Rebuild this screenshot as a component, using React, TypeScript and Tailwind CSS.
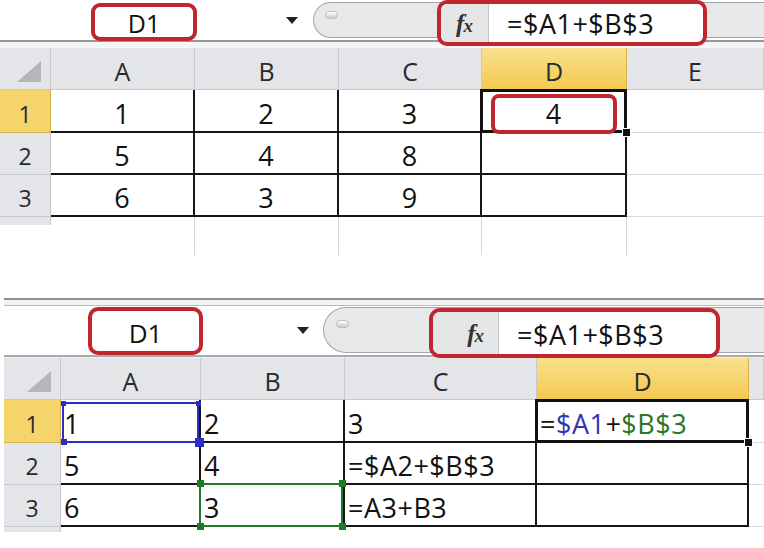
const FONT = "font-['Open_Sans','Noto_Sans',sans-serif]"
const RED = 'border-[#c0262e]'

type Col = { label: string; w: string; active?: boolean }

const topCols: Col[] = [
  { label: 'A', w: 'w-[144px]' },
  { label: 'B', w: 'w-[144px]' },
  { label: 'C', w: 'w-[143px]' },
  { label: 'D', w: 'w-[145px]', active: true },
  { label: 'E', w: 'flex-1' },
]

const topRows = [
  { n: '1', h: 'h-[43px]', cells: ['1', '2', '3', '4', ''] },
  { n: '2', h: 'h-[42px]', cells: ['5', '4', '8', '', ''] },
  { n: '3', h: 'h-[42px]', cells: ['6', '3', '9', '', ''] },
]

const botCols: Col[] = [
  { label: 'A', w: 'w-[140px]' },
  { label: 'B', w: 'w-[144px]' },
  { label: 'C', w: 'w-[192px]' },
  { label: 'D', w: 'w-[212px]', active: true },
  { label: '', w: 'flex-1' },
]

const botRows = [
  { n: '1', h: 'h-[43px]', cells: ['1', '2', '3', '', ''] },
  { n: '2', h: 'h-[42px]', cells: ['5', '4', '=$A2+$B$3', '', ''] },
  { n: '3', h: 'h-[42px]', cells: ['6', '3', '=A3+B3', '', ''] },
]

function Corner({ w }: { w: string }) {
  return (
    <div className={`${w} shrink-0 bg-[#e3e5e8] border-r border-b border-[#c3c6cb] flex items-end justify-end pr-[9px] pb-[7px]`}>
      <svg width="24" height="21" viewBox="0 0 24 21">
        <polygon points="24,0 24,21 0,21" fill="#b4b6b9" />
      </svg>
    </div>
  )
}

function HeaderRow({ cols, corner }: { cols: Col[]; corner: string }) {
  return (
    <div className="flex h-[42px]">
      <Corner w={corner} />
      {cols.map((c, i) => (
        <div
          key={i}
          className={`${c.w} shrink-0 flex items-center justify-center pt-[5px] text-[25px] leading-none text-[#2a2a2a] border-b ${
            c.active
              ? 'bg-gradient-to-b from-[#f9e08c] to-[#f3c94f] border-r border-[#d9b24a]'
              : 'bg-[#e3e5e8] border-r border-[#c6c9ce]'
          }`}
        >
          {c.label}
        </div>
      ))}
    </div>
  )
}

function RowHead({ n, w, active }: { n: string; w: string; active: boolean }) {
  return (
    <div
      className={`${w} shrink-0 flex items-center justify-center pt-[6px] text-[23px] leading-none text-[#2a2a2a] border-r border-b ${
        active ? 'bg-[#f5d46b] border-[#d4b04c]' : 'bg-[#e3e5e8] border-[#c3c6cb]'
      }`}
    >
      {n}
    </div>
  )
}

function FillHandle() {
  return <div className="absolute right-[-6px] bottom-[-6px] w-[9px] h-[9px] bg-[#111] border border-white z-20" />
}

function Handle({ pos, color, size }: { pos: string; color: string; size: string }) {
  return <div className={`absolute ${pos} ${size} ${color} z-20`} />
}

function Fx() {
  return (
    <span className="font-['Liberation_Serif',serif] italic font-bold leading-none text-[#333] flex items-baseline">
      <span className="text-[25px]">f</span>
      <span className="text-[19px] -ml-[1px]">x</span>
    </span>
  )
}

function TopSheet() {
  return (
    <div>
      {/* formula bar */}
      <div className="flex h-[40px] bg-white">
        <div className="w-[313px] shrink-0 flex items-center">
          <div className={`relative z-10 self-start ml-[91px] mt-[3px] w-[106px] h-[38px] rounded-[9px] border-4 ${RED} bg-white flex items-center justify-center pt-[2px] text-[25px] leading-none text-[#111]`}>
            D1
          </div>
          <div className="ml-[89px] w-0 h-0 border-x-[6px] border-x-transparent border-t-[7px] border-t-[#222]" />
        </div>
        <div className="flex-1 mt-[2px] h-[36px] rounded-l-[18px] border border-r-0 border-[#a3a5a8] bg-[#e7e8ea] flex">
          <div className="w-[123px] shrink-0">
            <div className="ml-[11px] mt-[8px] w-[13px] h-[8px] rounded-full bg-gradient-to-b from-white to-[#c9cacc] border border-[#bdbec0]" />
          </div>
          <div className={`relative z-10 self-start -mt-[3px] w-[270px] h-[46px] rounded-[10px] border-4 ${RED} flex overflow-hidden`}>
            <div className="w-[48px] shrink-0 bg-[#e5e6e8] border-r border-[#c4c5c7] flex items-center justify-center">
              <Fx />
            </div>
            <div className="flex-1 bg-white pl-[18px] pt-[1px] flex items-center text-[27px] leading-none tracking-[0.5px] text-[#111]">
              =$A1+$B$3
            </div>
          </div>
        </div>
      </div>
      <div className="h-[2px] bg-[#959799]" />
      <div className="h-[6px] bg-[#f5f5f5]" />

      <HeaderRow cols={topCols} corner="w-[51px]" />
      {topRows.map((r, ri) => (
        <div key={ri} className={`flex ${r.h}`}>
          <RowHead n={r.n} w="w-[51px]" active={ri === 0} />
          {topCols.map((c, ci) => (
            <div
              key={ci}
              className={`${c.w} shrink-0 relative flex items-center justify-center pt-[5px] text-[27px] leading-none text-[#111] ${
                ci < 4 ? 'border-r-2 border-b-2 border-[#161616]' : 'border-b border-[#dadada]'
              }`}
            >
              {r.cells[ci]}
              {ri === 0 && ci === 3 && (
                <>
                  <div className="absolute -left-[2px] -top-[1px] right-[-2px] bottom-[-2px] border-[3px] border-[#111] z-10" />
                  <FillHandle />
                  <div className={`absolute left-[9px] top-[4px] w-[126px] h-[40px] rounded-[8px] border-4 ${RED} z-10`} />
                </>
              )}
            </div>
          ))}
        </div>
      ))}
      <div className="flex h-[38px]">
        <div className="w-[51px] shrink-0">
          <div className="h-[8px] bg-[#e3e5e8] border-r border-[#c3c6cb]" />
        </div>
        {topCols.map((c, ci) => (
          <div key={ci} className={`${c.w} shrink-0 ${ci < 4 ? 'border-r border-[#d6d6d6]' : ''}`} />
        ))}
      </div>
    </div>
  )
}

function BottomSheet() {
  return (
    <div className="pl-[4px]">
      <div className="h-[2px] bg-[#8e9093]" />
      <div className="h-[5px] bg-[#f3f3f3]" />
      <div className="h-[1px] bg-[#b8babc]" />
      {/* formula bar */}
      <div className="flex h-[49px] bg-white">
        <div className="w-[319px] shrink-0 flex items-center">
          <div className={`relative z-10 self-start ml-[84px] mt-[1px] w-[115px] h-[48px] rounded-[10px] border-4 ${RED} bg-white flex items-center justify-center pt-[3px] text-[26px] leading-none text-[#111]`}>
            D1
          </div>
          <div className="ml-[94px] w-0 h-0 border-x-[6px] border-x-transparent border-t-[7px] border-t-[#222]" />
        </div>
        <div className="flex-1 mt-[1px] h-[46px] rounded-l-[23px] border border-r-0 border-[#a3a5a8] bg-[#e7e8ea] flex">
          <div className="w-[105px] shrink-0">
            <div className="ml-[12px] mt-[12px] w-[13px] h-[8px] rounded-full bg-gradient-to-b from-white to-[#c9cacc] border border-[#bdbec0]" />
          </div>
          <div className={`relative z-10 self-start w-[291px] h-[50px] rounded-[11px] border-4 ${RED} flex overflow-hidden`}>
            <div className="w-[66px] shrink-0 bg-[#e5e6e8] border-r border-[#c4c5c7] flex items-center justify-end pr-[14px]">
              <Fx />
            </div>
            <div className="flex-1 bg-white pl-[18px] pt-[2px] flex items-center text-[27px] leading-none tracking-[0.5px] text-[#111]">
              =$A1+$B$3
            </div>
          </div>
        </div>
      </div>
      <div className="h-[2px] bg-[#a8aaad]" />
      <div className="h-[1px] bg-[#f0f0f0]" />

      <HeaderRow cols={botCols} corner="w-[57px]" />
      {botRows.map((r, ri) => (
        <div key={ri} className={`flex ${r.h}`}>
          <RowHead n={r.n} w="w-[57px]" active={ri === 0} />
          {botCols.map((c, ci) => (
            <div
              key={ci}
              className={`${c.w} shrink-0 relative flex items-center pl-[3px] pt-[5px] text-[27px] leading-none tracking-[0.5px] text-[#111] whitespace-nowrap ${
                ci < 4 ? 'border-r-2 border-b-2 border-[#161616]' : 'border-b border-[#dadada]'
              }`}
            >
              {ri === 0 && ci === 3 ? (
                <>
                  <span>=</span>
                  <span className="text-[#2f35b8]">$A1</span>
                  <span>+</span>
                  <span className="text-[#25792a]">$B$3</span>
                  <div className="absolute -left-[2px] -top-[1px] right-[-2px] bottom-[-2px] border-[3px] border-[#111] z-10" />
                  <FillHandle />
                </>
              ) : (
                r.cells[ci]
              )}
              {ri === 0 && ci === 0 && (
                <>
                  <div className="absolute left-[1px] top-[2px] right-[0px] bottom-[-2px] border-2 border-[#2b2fc4] z-10" />
                  <Handle pos="left-[0px] top-[1px]" size="w-[5px] h-[5px]" color="bg-[#2b2fc4]" />
                  <Handle pos="right-[-2px] top-[1px]" size="w-[5px] h-[5px]" color="bg-[#2b2fc4]" />
                  <Handle pos="left-[0px] bottom-[-4px]" size="w-[6px] h-[6px]" color="bg-[#2b2fc4]" />
                  <Handle pos="right-[-5px] bottom-[-6px]" size="w-[9px] h-[9px]" color="bg-[#2b2fc4]" />
                </>
              )}
              {ri === 2 && ci === 1 && (
                <>
                  <div className="absolute -left-[2px] -top-[2px] right-[0px] bottom-[-2px] border-2 border-[#1f7a24] z-10" />
                  <Handle pos="-left-[4px] -top-[5px]" size="w-[7px] h-[7px]" color="bg-[#1f7a24]" />
                  <Handle pos="right-[-3px] -top-[5px]" size="w-[7px] h-[7px]" color="bg-[#1f7a24]" />
                  <Handle pos="-left-[4px] bottom-[-5px]" size="w-[7px] h-[7px]" color="bg-[#1f7a24]" />
                  <Handle pos="right-[-3px] bottom-[-5px]" size="w-[7px] h-[7px]" color="bg-[#1f7a24]" />
                </>
              )}
            </div>
          ))}
        </div>
      ))}
      <div className="flex h-[21px]">
        <div className="w-[57px] shrink-0">
          <div className="h-[5px] bg-[#e3e5e8] border-r border-[#c3c6cb]" />
        </div>
      </div>
    </div>
  )
}

export default function App() {
  return (
    <div className={`${FONT} w-[764px] h-[548px] overflow-hidden bg-white`}>
      <TopSheet />
      <div className="h-[43px] bg-white" />
      <BottomSheet />
    </div>
  )
}
